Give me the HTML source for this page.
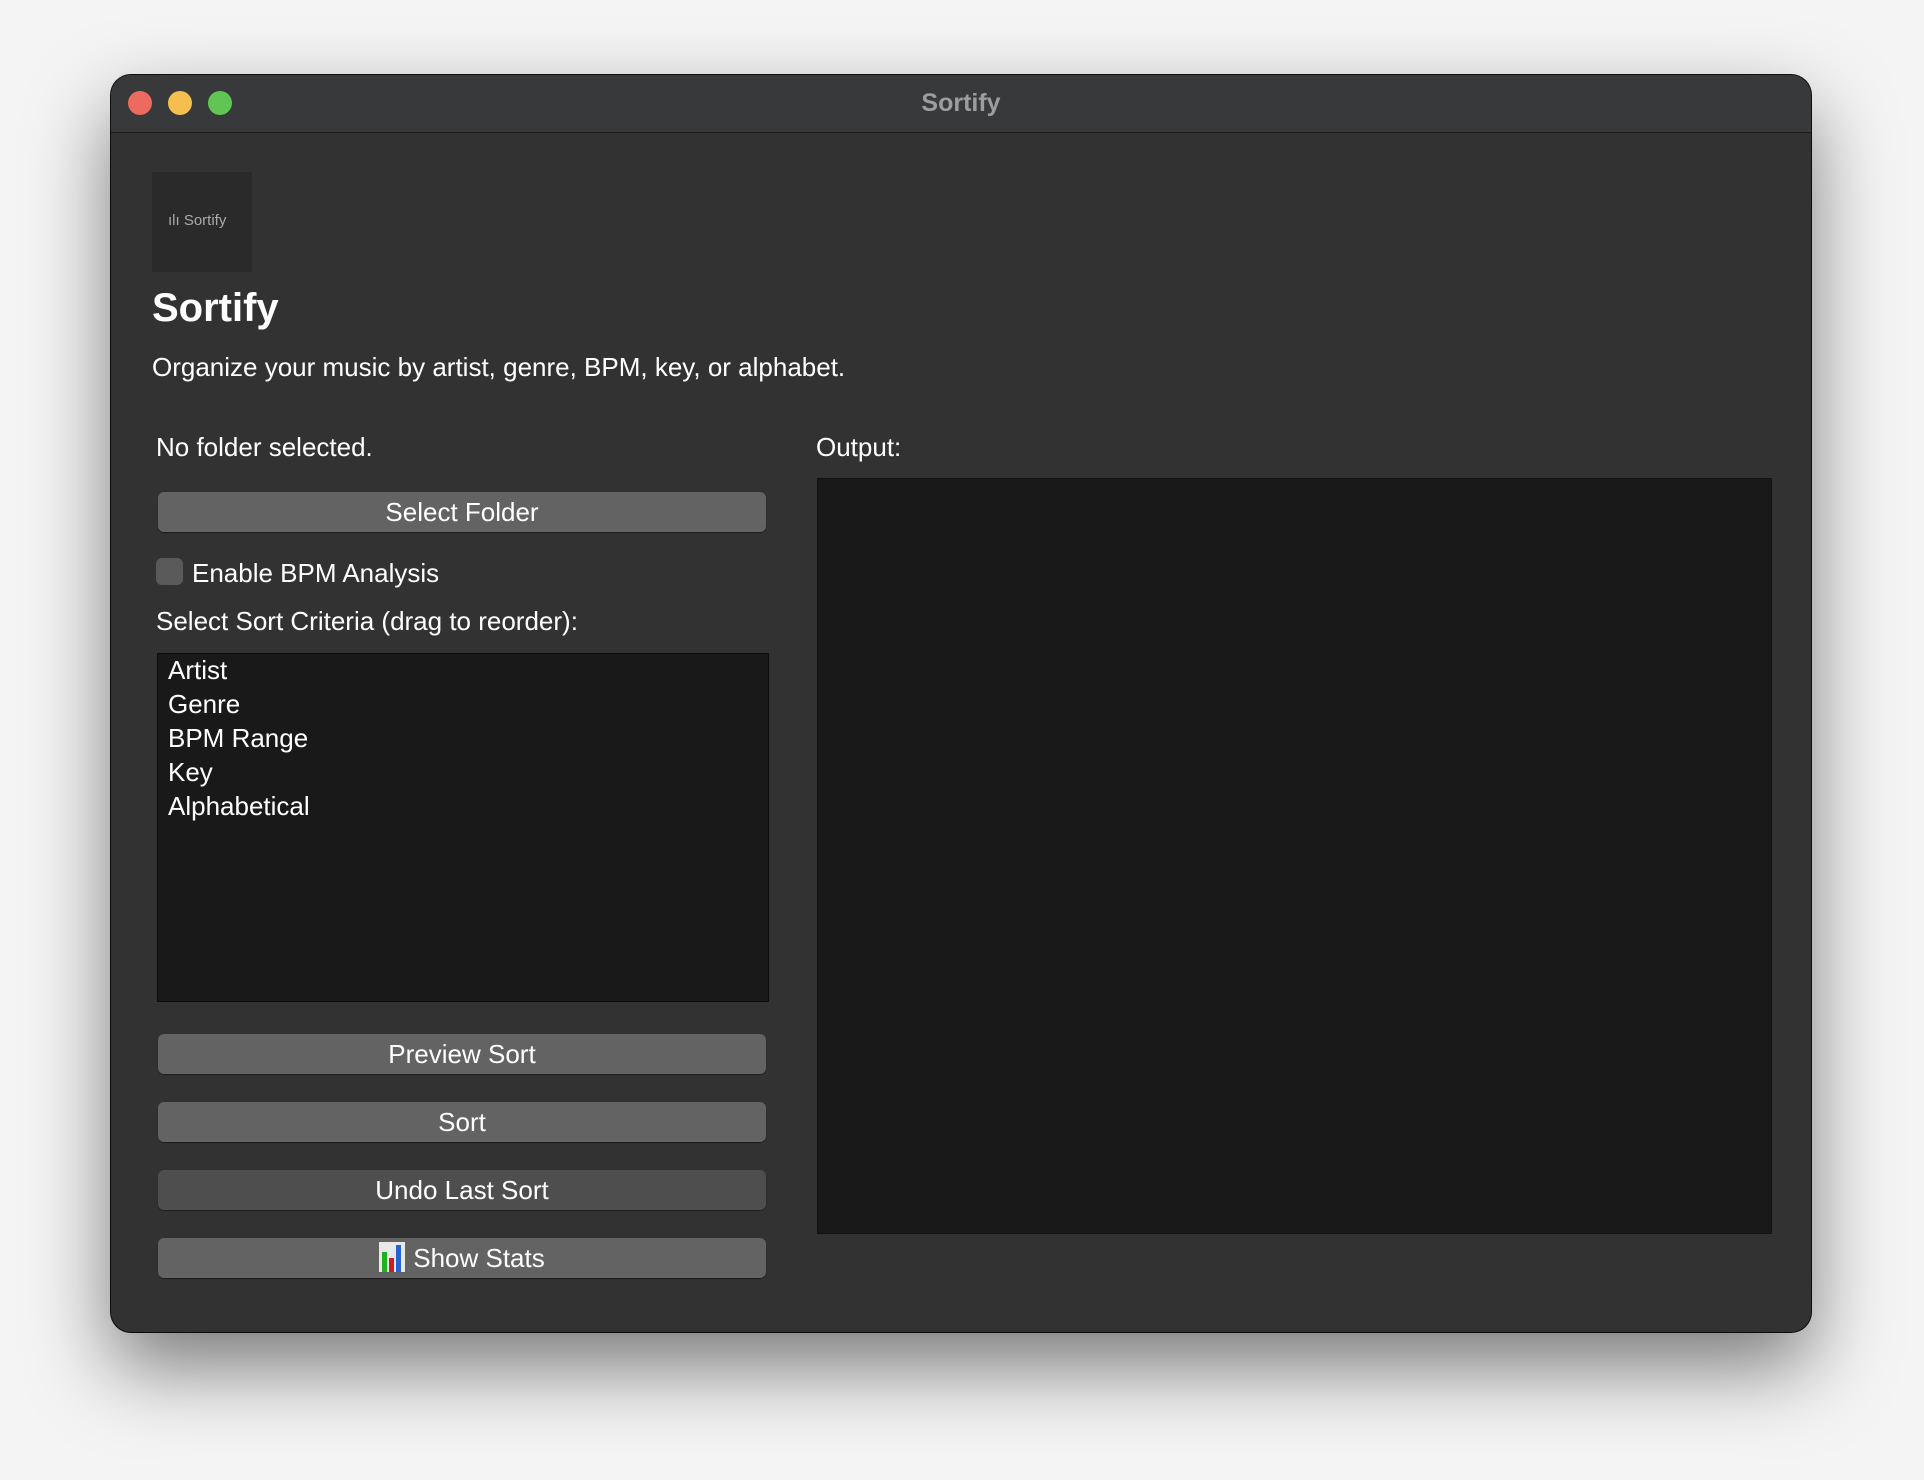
<!DOCTYPE html>
<html><head><style>
body{margin:0;width:1924px;height:1480px;background:#f4f4f4;font-family:"Liberation Sans",sans-serif;position:relative;overflow:hidden}
.win{position:absolute;left:111px;top:75px;width:1700px;height:1257px;background:#323232;border-radius:20px;box-shadow:0 35px 80px rgba(0,0,0,.5),0 0 0 1px #111;overflow:hidden}
.tb{position:absolute;left:0;top:0;right:0;height:57px;background:#38393b;border-bottom:1px solid #1a1a1a}
.dot{position:absolute;top:16px;width:24px;height:24px;border-radius:50%}
.t{position:absolute;color:#fff;white-space:nowrap}
.btn{position:absolute;left:47px;width:608px;height:40px;background:#636363;border-radius:6px;color:#fff;font-size:26px;text-align:center;line-height:40px;box-shadow:0 1px 1px rgba(0,0,0,.4)}
</style></head><body>
<div class="win">
 <div class="tb">
  <div class="dot" style="left:17px;background:#ec6a5e"></div>
  <div class="dot" style="left:57px;background:#f4bf4f"></div>
  <div class="dot" style="left:97px;background:#61c554"></div>
  <div class="t" style="left:0;right:0;text-align:center;top:14px;font-size:25px;font-weight:bold;color:#9d9d9d">Sortify</div>
 </div>
 <div style="position:absolute;left:41px;top:97px;width:100px;height:100px;background:#2a2a2a"></div>
 <div class="t" style="left:57px;top:137px;font-size:15px;color:#aaa">ılı Sortify</div>
 <div class="t" style="left:41px;top:211px;font-size:40px;font-weight:bold">Sortify</div>
 <div class="t" style="left:41px;top:277px;font-size:26px">Organize your music by artist, genre, BPM, key, or alphabet.</div>
 <div class="t" style="left:45px;top:357px;font-size:26px">No folder selected.</div>
 <div class="btn" style="top:417px">Select Folder</div>
 <div style="position:absolute;left:45px;top:483px;width:27px;height:27px;border-radius:6px;background:#5a5a5a"></div>
 <div class="t" style="left:81px;top:483px;font-size:26px">Enable BPM Analysis</div>
 <div class="t" style="left:45px;top:531px;font-size:26px">Select Sort Criteria (drag to reorder):</div>
 <div style="position:absolute;left:46px;top:578px;width:610px;height:347px;background:#191919;border:1px solid #0c0c0c"></div>
 <div class="t" style="left:57px;top:578px;font-size:26px;line-height:34px">Artist<br>Genre<br>BPM Range<br>Key<br>Alphabetical</div>
 <div class="btn" style="top:959px">Preview Sort</div>
 <div class="btn" style="top:1027px">Sort</div>
 <div class="btn" style="top:1095px;background:#4e4e4e">Undo Last Sort</div>
 <div class="btn" style="top:1163px"><span style="display:inline-block;width:26px;height:30px;vertical-align:-5px;background:#e8e8e8;position:relative;margin-right:8px"><span style="position:absolute;left:3px;bottom:0;width:5px;height:20px;background:#1bb31b"></span><span style="position:absolute;left:10px;bottom:0;width:5px;height:14px;background:#c62020"></span><span style="position:absolute;left:17px;bottom:0;width:5px;height:27px;background:#2463d4"></span></span>Show Stats</div>
 <div class="t" style="left:705px;top:357px;font-size:26px">Output:</div>
 <div style="position:absolute;left:706px;top:403px;width:953px;height:754px;background:#191919;border:1px solid #111"></div>
</div>
</body></html>
